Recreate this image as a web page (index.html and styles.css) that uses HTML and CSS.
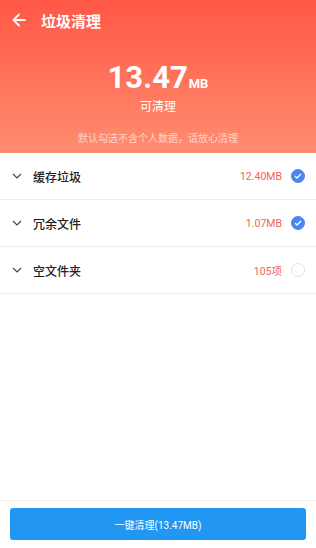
FILE: index.html
```html
<!DOCTYPE html>
<html lang="zh-CN">
<head>
    <meta charset="UTF-8">
    <meta name="viewport" content="width=device-width, initial-scale=1.0">
    <title>垃圾清理</title>
    <link rel="stylesheet" href="styles.css">
</head>
<body>
    <div class="page">
        <div class="header">
            <div class="topbar">
                <svg class="back" width="16" height="16" viewBox="0 0 16 16">
                    <path d="M14 8H2.5M8 2.5L2.5 8L8 13.5" fill="none" stroke="#fff" stroke-width="1.8" stroke-linecap="round" stroke-linejoin="round"/>
                </svg>
                <span class="title">垃圾清理</span>
            </div>
            <div class="total">
                <div class="size"><span class="num">13.47</span><span class="unit">MB</span></div>
                <div class="label">可清理</div>
            </div>
            <div class="note">默认勾选不含个人数据，请放心清理</div>
        </div>

        <div class="list">
            <div class="row">
                <svg class="chev" width="10" height="6" viewBox="0 0 10 6"><path d="M1 1L5 5L9 1" fill="none" stroke="#444" stroke-width="1.2"/></svg>
                <span class="name">缓存垃圾</span>
                <span class="value">12.40MB</span>
                <span class="check on"><svg width="8" height="6" viewBox="0 0 8 6"><path d="M1 3L3 5L7 1" fill="none" stroke="#fff" stroke-width="1.3"/></svg></span>
            </div>
            <div class="row">
                <svg class="chev" width="10" height="6" viewBox="0 0 10 6"><path d="M1 1L5 5L9 1" fill="none" stroke="#444" stroke-width="1.2"/></svg>
                <span class="name">冗余文件</span>
                <span class="value">1.07MB</span>
                <span class="check on"><svg width="8" height="6" viewBox="0 0 8 6"><path d="M1 3L3 5L7 1" fill="none" stroke="#fff" stroke-width="1.3"/></svg></span>
            </div>
            <div class="row">
                <svg class="chev" width="10" height="6" viewBox="0 0 10 6"><path d="M1 1L5 5L9 1" fill="none" stroke="#444" stroke-width="1.2"/></svg>
                <span class="name">空文件夹</span>
                <span class="value">105项</span>
                <span class="check"></span>
            </div>
        </div>

        <div class="footer">
            <button class="clean">一键清理(13.47MB)</button>
        </div>
    </div>
</body>
</html>
```

FILE: styles.css
```css
body {
    font-family: Roboto, "Noto Sans CJK SC", sans-serif;
    margin: 0;
    padding: 0;
    background: #fff;
    color: #222;
}
.page {
    height: 548px;
    display: flex;
    flex-direction: column;
}
.header {
    height: 153px;
    background: linear-gradient(to bottom, #ff5745, #ff8d70);
    color: #fff;
    display: flex;
    flex-direction: column;
}
.topbar {
    height: 40px;
    display: flex;
    align-items: center;
    padding-left: 11px;
}
.back {
    margin-right: 14px;
}
.title {
    font-size: 15px;
    font-weight: bold;
}
.total {
    margin-top: 22px;
    text-align: center;
}
.size {
    line-height: 32px;
}
.num {
    font-size: 31px;
    font-weight: bold;
}
.unit {
    font-size: 13px;
    font-weight: bold;
    margin-left: 1px;
}
.label {
    font-size: 12px;
    line-height: 14px;
}
.note {
    margin-top: auto;
    margin-bottom: 8px;
    text-align: center;
    font-size: 10px;
    color: rgba(255, 255, 255, 0.65);
}
.list {
    flex: 1;
}
.row {
    height: 46px;
    border-bottom: 1px solid #ececec;
    display: flex;
    align-items: center;
    padding: 0 11px 0 12px;
}
.chev {
    margin-right: 11px;
}
.name {
    flex: 1;
    font-size: 12px;
    font-weight: 500;
    color: #222;
}
.value {
    font-size: 10.5px;
    color: #f0625a;
    margin-right: 9px;
}
.check {
    width: 12px;
    height: 12px;
    border-radius: 50%;
    border: 1px solid #e2e2e2;
    display: flex;
    align-items: center;
    justify-content: center;
}
.check.on {
    background: #4a86f0;
    border-color: #4a86f0;
}
.footer {
    border-top: 1px solid #f0f0f0;
    padding: 7px 10px 8px;
}
.clean {
    width: 100%;
    height: 32px;
    border: none;
    border-radius: 3px;
    background: #2196f3;
    color: #fff;
    font-family: Roboto, "Noto Sans CJK SC", sans-serif;
    font-size: 10px;
}
```
